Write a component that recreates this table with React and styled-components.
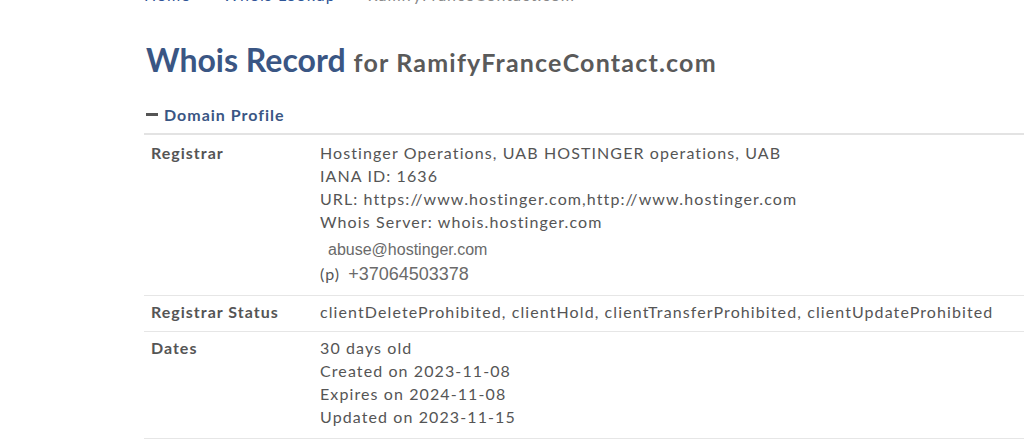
import React from "react";
import styled, { createGlobalStyle } from "styled-components";

const Global = createGlobalStyle`
  html, body { margin: 0; padding: 0; background: #fff; overflow: hidden; }
  body { font-family: Lato, "Liberation Sans", sans-serif; color: #555; }
`;

const Page = styled.div`
  padding-left: 144px;
  width: 880px;
`;

const Crumbs = styled.div`
  display: flex;
  gap: 12px;
  font-size: 16px;
  letter-spacing: 1px;
  line-height: 20px;
  margin-top: -15px;
  height: 20px;
  white-space: nowrap;
`;

const CrumbLink = styled.a`
  color: ${(p) => (p.$current ? "#888" : "#2f5597")};
  text-decoration: none;
`;

const Sep = styled.span`
  color: #999;
`;

const Title = styled.h1`
  margin: 35px 0 0 2px;
  font-size: 32px;
  line-height: 40px;
  font-weight: 700;
  color: #3a5684;
  white-space: nowrap;
`;

const TitleSub = styled.small`
  font-size: 25px;
  letter-spacing: 1.2px;
  color: #5a5a5a;
  margin-left: 8px;
`;

const Section = styled.div`
  margin-top: 20px;
  display: flex;
  align-items: center;
  gap: 6px;
  font-size: 16px;
  letter-spacing: 1px;
  font-weight: 700;
  color: #3a5684;
  padding-left: 2px;
  height: 24px;
`;

const Minus = styled.span`
  width: 12px;
  height: 3px;
  background: #555;
  display: inline-block;
`;

const Table = styled.div`
  margin-top: 7px;
  border-top: 2px solid #e3e3e3;
  width: 880px;
`;

const Row = styled.div`
  display: grid;
  grid-template-columns: 169px 1fr;
  border-bottom: 1px solid #e6e6e6;
  padding: ${(p) => p.$pad || "6px 0 9px"};
`;

const Label = styled.div`
  padding-left: 7px;
  font-size: 16px;
  letter-spacing: 1px;
  font-weight: 700;
  line-height: 23px;
  color: #555;
`;

const Value = styled.div`
  padding-left: 7px;
  font-size: 16px;
  letter-spacing: 1.1px;
  line-height: 23px;
  color: #555;
  white-space: nowrap;
`;

const Line = styled.div``;

const Email = styled.div`
  font-family: "Liberation Sans", Lato, sans-serif;
  font-size: 16px;
  letter-spacing: 0;
  color: #6a6a6a;
  padding-left: 8px;
  line-height: 24px;
  margin-top: 5px;
`;

const Phone = styled.div`
  line-height: 24px;
  display: flex;
  gap: 8px;
  align-items: baseline;
`;

const PhoneNum = styled.span`
  font-family: "Liberation Sans", Lato, sans-serif;
  font-size: 18px;
  letter-spacing: 0;
  color: #6a6a6a;
`;

export default function App() {
  return (
    <>
      <Global />
      <Page>
        <Crumbs>
          <CrumbLink href="#">Home</CrumbLink>
          <Sep>»</Sep>
          <CrumbLink href="#">Whois Lookup</CrumbLink>
          <Sep>»</Sep>
          <CrumbLink $current>RamifyFranceContact.com</CrumbLink>
        </Crumbs>
        <Title>
          Whois Record<TitleSub>for RamifyFranceContact.com</TitleSub>
        </Title>
        <Section>
          <Minus />
          Domain Profile
        </Section>
        <Table>
          <Row>
            <Label>Registrar</Label>
            <Value>
              <Line>Hostinger Operations, UAB HOSTINGER operations, UAB</Line>
              <Line>IANA ID: 1636</Line>
              <Line>URL: https://www.hostinger.com,http://www.hostinger.com</Line>
              <Line>Whois Server: whois.hostinger.com</Line>
              <Email>abuse@hostinger.com</Email>
              <Phone>
                (p)<PhoneNum>+37064503378</PhoneNum>
              </Phone>
            </Value>
          </Row>
          <Row $pad="4px 0 8px">
            <Label>Registrar Status</Label>
            <Value>
              clientDeleteProhibited, clientHold, clientTransferProhibited, clientUpdateProhibited
            </Value>
          </Row>
          <Row $pad="4px 0 10px">
            <Label>Dates</Label>
            <Value>
              <Line>30 days old</Line>
              <Line>Created on 2023-11-08</Line>
              <Line>Expires on 2024-11-08</Line>
              <Line>Updated on 2023-11-15</Line>
            </Value>
          </Row>
        </Table>
      </Page>
    </>
  );
}
